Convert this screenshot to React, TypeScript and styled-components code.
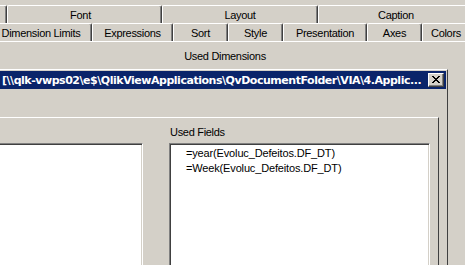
import React from "react";
import styled, { createGlobalStyle } from "styled-components";

const Global = createGlobalStyle`
  html, body { margin: 0; padding: 0; background: #d4d0c8; }
  * { box-sizing: border-box; }
`;

const Screen = styled.div`
  width: 465px;
  height: 265px;
  overflow: hidden;
  background: #d4d0c8;
  font-family: "Liberation Sans", Arial, sans-serif;
  font-size: 11px;
  color: #000;
`;

const TabStrip = styled.div`
  padding-top: 5px;
`;

const TabRow = styled.div<{ $offset: number }>`
  display: flex;
  margin-left: ${(p) => p.$offset}px;
`;

const Tab = styled.div<{ $w: number; $shift?: number }>`
  flex: 0 0 ${(p) => p.$w}px;
  height: 18px;
  border-top: 1px solid #fff;
  border-left: 1px solid #fff;
  border-right: 1px solid #404040;
  box-shadow: inset -1px 0 0 #808080;
  border-top-left-radius: 2px;
  border-top-right-radius: 2px;
  display: flex;
  align-items: center;
  justify-content: center;
  padding-right: ${(p) => p.$shift ?? 0}px;
  letter-spacing: -0.3px;
  white-space: nowrap;
`;

const Panel = styled.div`
  border-top: 1px solid #fff;
  padding-top: 8px;
`;

const SectionLabel = styled.div`
  width: 450px;
  text-align: center;
  line-height: 13px;
  letter-spacing: -0.3px;
`;

const Window = styled.div`
  margin-top: 6px;
  margin-left: -8px;
  width: 456px;
  border-top: 1px solid #fff;
  border-right: 1px solid #404040;
  padding: 1px 1px 0 0;
`;

const TitleBar = styled.div`
  height: 18px;
  background: #0a246a;
  display: flex;
  align-items: center;
  padding-left: 10px;
  padding-right: 2px;
  gap: 1px;
`;

const TitleText = styled.div`
  flex: 1;
  color: #fff;
  font-family: "DejaVu Sans", Verdana, sans-serif;
  font-weight: bold;
  font-size: 11px;
  letter-spacing: -0.47px;
  white-space: nowrap;
  overflow: hidden;
`;

const CloseButton = styled.div`
  flex: 0 0 16px;
  height: 14px;
  background: #d4d0c8;
  border-top: 1px solid #fff;
  border-left: 1px solid #fff;
  border-right: 1px solid #404040;
  border-bottom: 1px solid #404040;
  box-shadow: inset -1px -1px 0 #808080;
  display: flex;
  align-items: center;
  justify-content: center;
  padding: 0 1px 1px 0;
`;

const WindowBody = styled.div`
  padding-top: 28px;
  padding-right: 7px;
`;

const GroupPanel = styled.div`
  border-top: 1px solid #fff;
  border-right: 1px solid #404040;
  padding: 8px 8px 0 0;
  display: grid;
  grid-template-columns: 1fr 261px;
  grid-template-rows: 13px 140px;
  column-gap: 26px;
  row-gap: 4px;
`;

const FieldLabel = styled.div`
  line-height: 13px;
  padding-left: 1px;
  letter-spacing: -0.3px;
`;

const ListBox = styled.div`
  background: #fff;
  border-top: 1px solid #808080;
  border-left: 1px solid #808080;
  border-right: 1px solid #fff;
  border-bottom: 1px solid #fff;
  box-shadow: inset 1px 1px 0 #404040, inset -1px -1px 0 #d4d0c8;
  padding: 2px 0 0 16px;
`;

const ListItem = styled.div`
  line-height: 15px;
  letter-spacing: -0.15px;
  white-space: nowrap;
`;

const row1 = [
  { w: 155, label: "" },
  { w: 155, label: "Font", shift: 8 },
  { w: 156, label: "Layout" },
  { w: 156, label: "Caption" },
];

const row2 = [
  { w: 102, label: "Dimension Limits" },
  { w: 81, label: "Expressions" },
  { w: 55, label: "Sort" },
  { w: 55, label: "Style" },
  { w: 84, label: "Presentation" },
  { w: 55, label: "Axes" },
  { w: 48, label: "Colors" },
];

export default function App() {
  return (
    <>
      <Global />
      <Screen>
        <TabStrip>
          <TabRow $offset={-148}>
            {row1.map((t, i) => (
              <Tab key={i} $w={t.w} $shift={t.shift}>
                {t.label}
              </Tab>
            ))}
          </TabRow>
          <TabRow $offset={-10}>
            {row2.map((t, i) => (
              <Tab key={i} $w={t.w}>
                {t.label}
              </Tab>
            ))}
          </TabRow>
        </TabStrip>
        <Panel>
          <SectionLabel>Used Dimensions</SectionLabel>
          <Window>
            <TitleBar>
              <TitleText>
                [\\qlk-vwps02\e$\QlikViewApplications\QvDocumentFolder\VIA\4.Applic...
              </TitleText>
              <CloseButton>
                <svg width="8" height="7" viewBox="0 0 8 7">
                  <path
                    d="M0 0h2v1h1v1h2V1h1V0h2v1H7v1H6v1H5v1h1v1h1v1h1v1H6V6H5V5H3v1H2v1H0V6h1V5h1V4h1V3H2V2H1V1H0z"
                    fill="#000"
                  />
                </svg>
              </CloseButton>
            </TitleBar>
            <WindowBody>
              <GroupPanel>
                <div />
                <FieldLabel>Used Fields</FieldLabel>
                <ListBox />
                <ListBox>
                  <ListItem>=year(Evoluc_Defeitos.DF_DT)</ListItem>
                  <ListItem>=Week(Evoluc_Defeitos.DF_DT)</ListItem>
                </ListBox>
              </GroupPanel>
            </WindowBody>
          </Window>
        </Panel>
      </Screen>
    </>
  );
}
